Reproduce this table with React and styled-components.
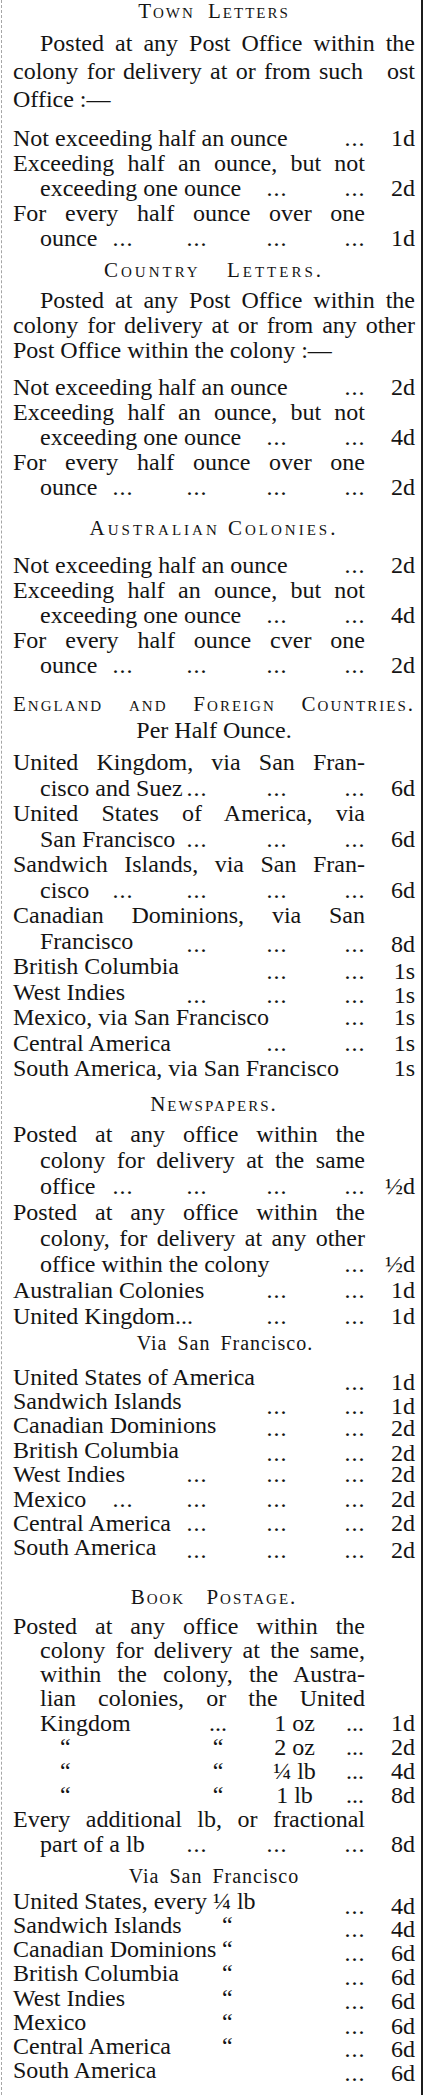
import React from 'react';
import styled, { createGlobalStyle, css } from 'styled-components';

const GlobalStyle = createGlobalStyle`
  html, body {
    margin: 0;
    padding: 0;
    background: #fff;
  }
  body {
    font-family: 'Liberation Serif', 'Times New Roman', serif;
    color: #141414;
  }
`;

const Page = styled.div`
  width: 432px;
  min-height: 2095px;
  padding-left: 1px;
  box-sizing: border-box;
  display: flex;
`;

const Column = styled.div`
  width: 422px;
  box-sizing: border-box;
  border-left: 1px dashed #a6a6a6;
  border-right: 2px solid #1c1c1c;
  padding: 0 6px 0 11px;
  font-size: 24px;
  line-height: 25px;
`;

const Group = styled.div`
  line-height: ${(p) => p.$lh || 25}px;
  margin-bottom: ${(p) => p.$mb || 0}px;
`;

const Heading = styled.h2`
  margin: ${(p) => p.$mt || 0}px 0 ${(p) => p.$mb || 0}px;
  font-size: 21px;
  font-weight: normal;
  font-variant: small-caps;
  line-height: 22px;
  text-align: ${(p) => (p.$justify ? 'justify' : 'center')};
  text-align-last: ${(p) => (p.$justify ? 'justify' : 'center')};
  letter-spacing: ${(p) => p.$ls ?? 2}px;
  word-spacing: ${(p) => p.$ws ?? 0}px;
`;

const SubHeading = styled.h3`
  margin: ${(p) => p.$mt || 0}px 0 ${(p) => p.$mb || 0}px;
  padding-left: ${(p) => p.$shift || 0}px;
  font-size: ${(p) => p.$size || 24}px;
  line-height: ${(p) => p.$lh || 25}px;
  font-weight: normal;
  text-align: center;
  letter-spacing: ${(p) => p.$ls ?? 0}px;
  word-spacing: ${(p) => p.$ws ?? 0}px;
`;

const TextLine = styled.div`
  width: ${(p) => (p.$narrow ? '352px' : 'auto')};
  box-sizing: border-box;
  padding-left: ${(p) => (p.$indent ? 27 : 0)}px;
  text-align: ${(p) => (p.$justify ? 'justify' : 'left')};
  text-align-last: ${(p) => (p.$justify ? 'justify' : 'left')};
`;

const dropped = css`
  ${(p) => p.$drop && `transform: translateY(${p.$drop}px);`}
`;

const RateRow = styled.div`
  display: grid;
  grid-template-columns: 99px 22px 52px 22px 58px 22px 56px 22px 1fr;
`;

const Label = styled.span`
  grid-row: 1;
  grid-column: 1 / ${(p) => p.$end};
  padding-left: ${(p) => (p.$indent ? 27 : 0)}px;
  white-space: nowrap;
`;

const Leader = styled.span`
  grid-row: 1;
  grid-column: ${(p) => p.$col};
  text-align: center;
  letter-spacing: 1px;
  white-space: nowrap;
  ${dropped}
`;

const Ditto = styled.span`
  grid-row: 1;
  grid-column: 5;
  padding-left: 14px;
`;

const Rate = styled.span`
  grid-row: 1;
  grid-column: 9;
  text-align: right;
  white-space: nowrap;
  ${dropped}
`;

const BookRow = styled.div`
  display: grid;
  grid-template-columns: 27px 153px 50px 23px 57px 21px 22px 1fr;
`;

const BookCell = styled.span`
  grid-column: ${(p) => p.$col};
  text-align: ${(p) => p.$align || 'left'};
  padding-left: ${(p) => p.$pad || 0}px;
  white-space: nowrap;
`;

const Entry = ({ lines = [], label, dots = [], rate, ditto, drop, indent }) => {
  const end = dots.length ? dots[0] * 2 : 9;
  return (
    <>
      {lines.map((line, i) => (
        <TextLine key={line} $narrow $justify $indent={i > 0}>
          {line}
        </TextLine>
      ))}
      <RateRow>
        <Label $end={end} $indent={lines.length > 0 || indent}>
          {label}
        </Label>
        {ditto && <Ditto>“</Ditto>}
        {dots.map((d) => (
          <Leader key={d} $col={d * 2} $drop={drop}>
            ...
          </Leader>
        ))}
        <Rate $drop={drop}>{rate}</Rate>
      </RateRow>
    </>
  );
};

const Book = ({ first, second, weight, rate }) => (
  <BookRow>
    <BookCell $col={2} $pad={first === '“' ? 20 : 0}>{first}</BookCell>
    <BookCell $col={3} $align="center">{second}</BookCell>
    <BookCell $col={5} $align="center">{weight}</BookCell>
    <BookCell $col={7} $align="center">...</BookCell>
    <BookCell $col={8} $align="right">{rate}</BookCell>
  </BookRow>
);

const App = () => {
  return (
    <Page>
      <GlobalStyle />
      <Column>
        <section>
          <Heading $mb={7} $ls={2} $ws={6}>Town Letters</Heading>
          <Group $lh={28} $mb={13}>
            <TextLine $indent $justify>Posted at any Post Office within the</TextLine>
            <TextLine $justify>colony for delivery at or from such{'\u2003'}ost</TextLine>
            <TextLine>Office :—</TextLine>
          </Group>
          <Group>
            <Entry label="Not exceeding half an ounce" dots={[4]} rate="1d" />
            <Entry lines={['Exceeding half an ounce, but not']} label="exceeding one ounce" dots={[3, 4]} rate="2d" />
            <Entry lines={['For every half ounce over one']} label="ounce" dots={[1, 2, 3, 4]} rate="1d" />
          </Group>
        </section>

        <section>
          <Heading $mt={8} $mb={7} $ls={3} $ws={18}>Country Letters.</Heading>
          <Group $mb={12}>
            <TextLine $indent $justify>Posted at any Post Office within the</TextLine>
            <TextLine $justify>colony for delivery at or from any other</TextLine>
            <TextLine>Post Office within the colony :—</TextLine>
          </Group>
          <Group>
            <Entry label="Not exceeding half an ounce" dots={[4]} rate="2d" />
            <Entry lines={['Exceeding half an ounce, but not']} label="exceeding one ounce" dots={[3, 4]} rate="4d" />
            <Entry lines={['For every half ounce over one']} label="ounce" dots={[1, 2, 3, 4]} rate="2d" />
          </Group>
        </section>

        <section>
          <Heading $mt={17} $mb={14} $ls={3}>Australian Colonies.</Heading>
          <Group>
            <Entry label="Not exceeding half an ounce" dots={[4]} rate="2d" />
            <Entry lines={['Exceeding half an ounce, but not']} label="exceeding one ounce" dots={[3, 4]} rate="4d" />
            <Entry lines={['For every half ounce cver one']} label="ounce" dots={[1, 2, 3, 4]} rate="2d" />
          </Group>
        </section>

        <section>
          <Heading $mt={15} $mb={3} $ls={2} $justify>England and Foreign Countries.</Heading>
          <SubHeading $mb={7}>Per Half Ounce.</SubHeading>
          <Group $lh={25.5}>
            <Entry lines={['United Kingdom, via San Fran-']} label="cisco and Suez" dots={[2, 3, 4]} rate="6d" />
            <Entry lines={['United States of America, via']} label="San Francisco" dots={[2, 3, 4]} rate="6d" />
            <Entry lines={['Sandwich Islands, via San Fran-']} label="cisco" dots={[1, 2, 3, 4]} rate="6d" />
            <Entry lines={['Canadian Dominions, via San']} label="Francisco" dots={[2, 3, 4]} rate="8d" drop={3} />
            <Entry label="British Columbia" dots={[3, 4]} rate="1s" drop={5} />
            <Entry label="West Indies" dots={[2, 3, 4]} rate="1s" drop={3} />
            <Entry label="Mexico, via San Francisco" dots={[4]} rate="1s" />
            <Entry label="Central America" dots={[3, 4]} rate="1s" />
            <Entry label="South America, via San Francisco" rate="1s" />
          </Group>
        </section>

        <section>
          <Heading $mt={11} $mb={6} $ls={2}>Newspapers.</Heading>
          <Group $lh={26}>
            <Entry
              lines={['Posted at any office within the', 'colony for delivery at the same']}
              label="office"
              dots={[1, 2, 3, 4]}
              rate="½d"
            />
            <Entry
              lines={['Posted at any office within the', 'colony, for delivery at any other']}
              label="office within the colony"
              dots={[4]}
              rate="½d"
            />
            <Entry label="Australian Colonies" dots={[3, 4]} rate="1d" />
            <Entry label="United Kingdom..." dots={[3, 4]} rate="1d" />
          </Group>
          <SubHeading $mt={3} $mb={11} $size={20} $lh={22} $ls={1} $ws={4} $shift={22}>
            Via San Francisco.
          </SubHeading>
          <Group $lh={24.4}>
            <Entry label="United States of America" dots={[4]} rate="1d" drop={5} />
            <Entry label="Sandwich Islands" dots={[3, 4]} rate="1d" drop={5} />
            <Entry label="Canadian Dominions" dots={[3, 4]} rate="2d" drop={3} />
            <Entry label="British Columbia" dots={[3, 4]} rate="2d" drop={3} />
            <Entry label="West Indies" dots={[2, 3, 4]} rate="2d" />
            <Entry label="Mexico" dots={[1, 2, 3, 4]} rate="2d" />
            <Entry label="Central America" dots={[2, 3, 4]} rate="2d" />
            <Entry label="South America" dots={[2, 3, 4]} rate="2d" drop={3} />
          </Group>
        </section>

        <section>
          <Heading $mt={26} $mb={6} $ls={2} $ws={14}>Book Postage.</Heading>
          <Group $lh={24.2}>
            <TextLine $narrow $justify>Posted at any office within the</TextLine>
            <TextLine $narrow $justify $indent>colony for delivery at the same,</TextLine>
            <TextLine $narrow $justify $indent>within the colony, the Austra-</TextLine>
            <TextLine $narrow $justify $indent>lian colonies, or the United</TextLine>
            <Book first="Kingdom" second="..." weight="1 oz" rate="1d" />
            <Book first="“" second="“" weight="2 oz" rate="2d" />
            <Book first="“" second="“" weight="¼ lb" rate="4d" />
            <Book first="“" second="“" weight="1 lb" rate="8d" />
            <Entry lines={['Every additional lb, or fractional']} label="part of a lb" dots={[2, 3, 4]} rate="8d" />
          </Group>
          <SubHeading $mt={9} $mb={2} $size={20} $lh={22} $ls={1} $ws={4}>
            Via San Francisco
          </SubHeading>
          <Group $lh={24.2}>
            <Entry label="United States, every ¼ lb" dots={[4]} rate="4d" drop={5} />
            <Entry label="Sandwich Islands" ditto dots={[4]} rate="4d" drop={4} />
            <Entry label="Canadian Dominions" ditto dots={[4]} rate="6d" drop={4} />
            <Entry label="British Columbia" ditto dots={[4]} rate="6d" drop={4} />
            <Entry label="West Indies" ditto dots={[4]} rate="6d" drop={3} />
            <Entry label="Mexico" ditto dots={[4]} rate="6d" drop={4} />
            <Entry label="Central America" ditto dots={[4]} rate="6d" drop={3} />
            <Entry label="South America" dots={[4]} rate="6d" drop={3} />
          </Group>
        </section>
      </Column>
    </Page>
  );
};

export default App;
